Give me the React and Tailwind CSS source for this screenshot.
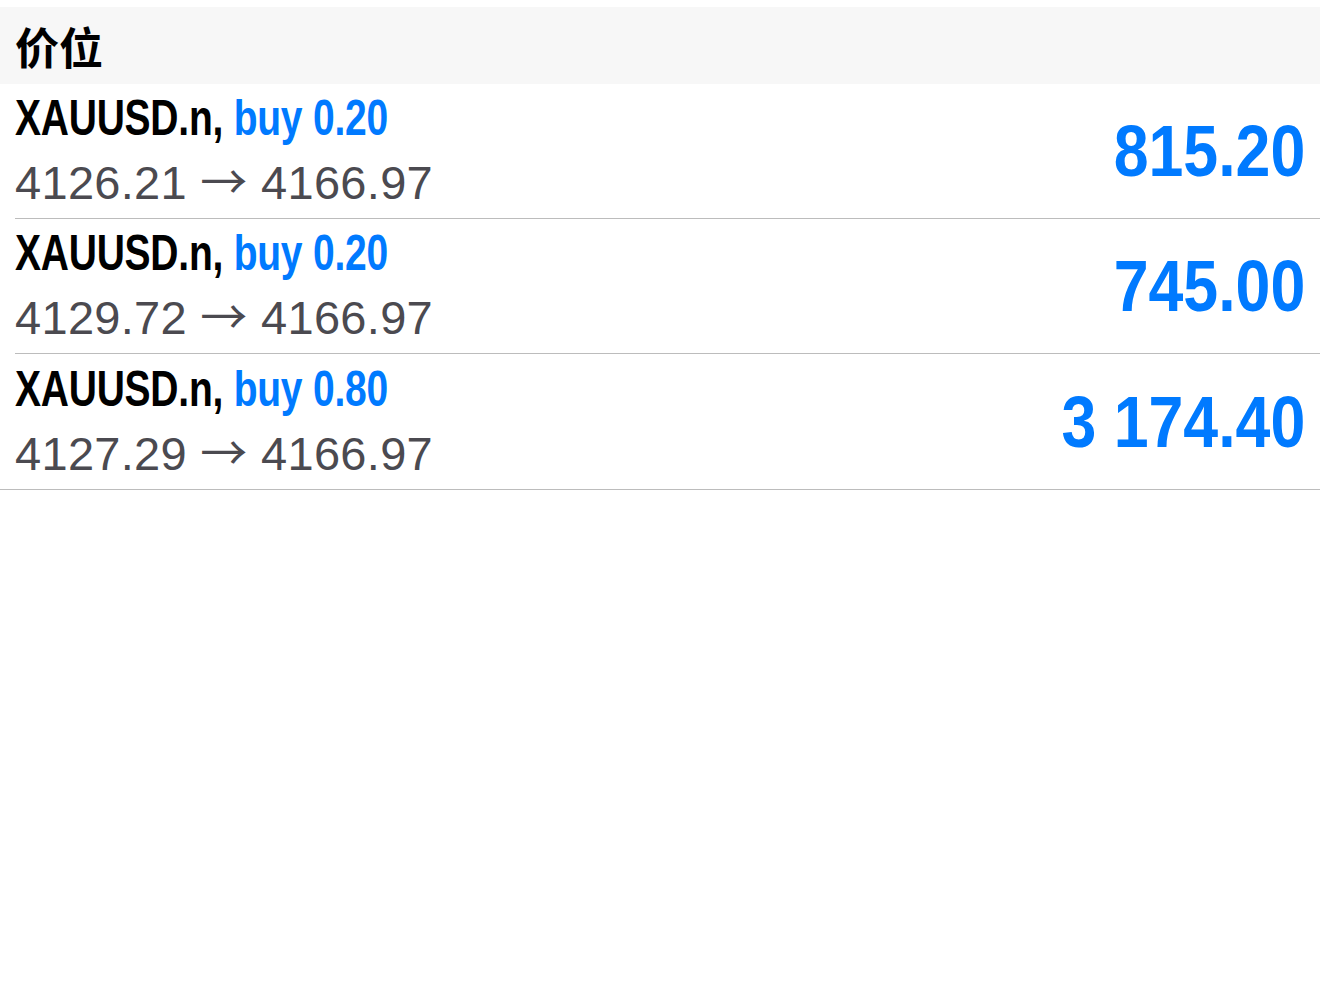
const positions = [
  { symbol: "XAUUSD.n", side: "buy", volume: "0.20", open: "4126.21", current: "4166.97", profit: "815.20" },
  { symbol: "XAUUSD.n", side: "buy", volume: "0.20", open: "4129.72", current: "4166.97", profit: "745.00" },
  { symbol: "XAUUSD.n", side: "buy", volume: "0.80", open: "4127.29", current: "4166.97", profit: "3 174.40" },
];

const App = () => {
  return (
    <div className="w-[1320px] h-[998px] bg-white pt-[7px]" style={{ fontFamily: '"Liberation Sans", Arial, sans-serif' }}>
      <div className="h-[77px] bg-[#f7f7f7] flex items-center pl-[15px]">
        <h1
          className="text-[44px] font-bold text-black leading-none"
          style={{ fontFamily: '"Noto Sans CJK SC", sans-serif' }}
        >
          价位
        </h1>
      </div>
      {positions.map((p, i) => {
        const last = i === positions.length - 1;
        return (
          <div key={i} className={last ? "pl-[15px] border-b border-[#bcbcbc]" : "pl-[15px]"}>
            <div
              className={
                "h-[135px] flex items-center justify-between pr-[15px] " +
                (last ? "" : "border-b border-[#bcbcbc]")
              }
            >
              <div className="flex flex-col">
                <div className="text-[50px] font-bold leading-[60px] tracking-[-0.3px] text-black whitespace-nowrap origin-left scale-x-[0.78]">
                  {p.symbol}, <span className="text-[#007aff]">{p.side} {p.volume}</span>
                </div>
                <div className="text-[47px] leading-[62px] tracking-[0.3px] text-[#4b4a50] whitespace-nowrap">
                  {p.open}{" "}
                  <span style={{ fontFamily: '"Noto Sans CJK SC", sans-serif' }}>→</span>{" "}
                  {p.current}
                </div>
              </div>
              <div className="text-[72px] font-bold text-[#007aff] leading-none whitespace-nowrap origin-right scale-x-[0.87]">
                {p.profit}
              </div>
            </div>
          </div>
        );
      })}
    </div>
  );
};

export default App;
